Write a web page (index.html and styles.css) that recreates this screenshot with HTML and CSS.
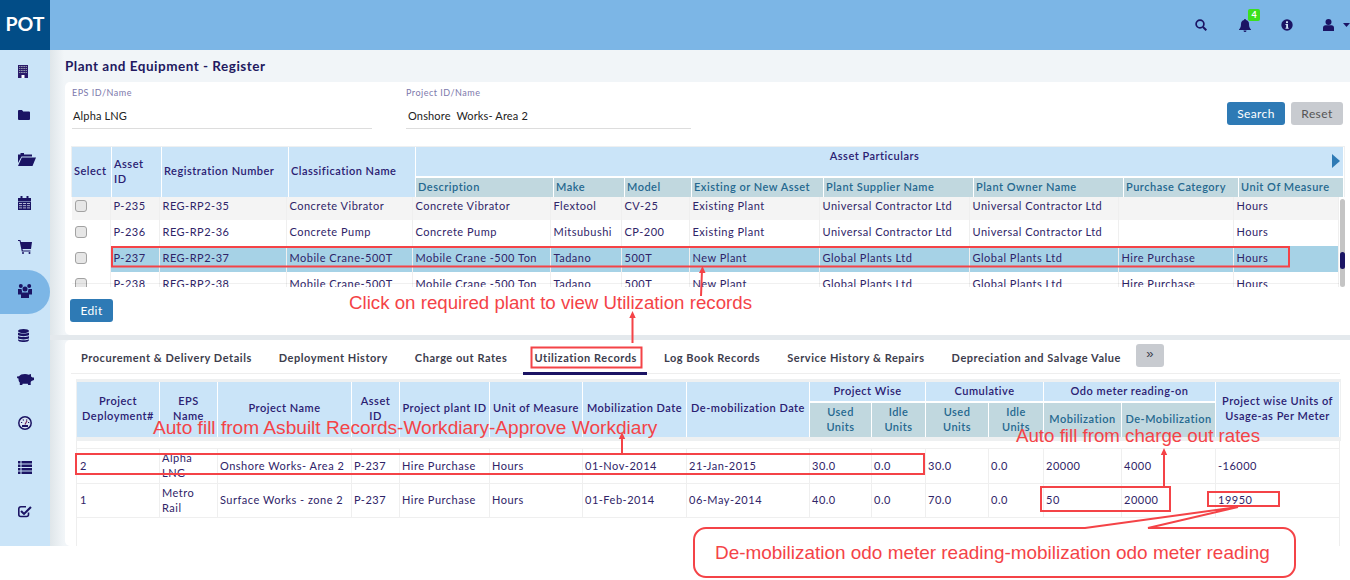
FILE: index.html
```html
<!DOCTYPE html>
<html lang="en">
<head>
<meta charset="utf-8"/>
<meta content="width=device-width, initial-scale=1.0" name="viewport"/>
<title>Plant and Equipment - Register</title>
<link rel="stylesheet" href="styles.css">
</head>
<body>
<div class="app">
<header class="topbar">
  <div class="logo">POT</div>
  <div class="top-icons">
    <svg class="ti-search" viewBox="0 0 12 12"><circle cx="5" cy="5" r="3.9" fill="none" stroke="#1b1464" stroke-width="1.7"/><path d="M8 8l3.3 3.3" stroke="#1b1464" stroke-width="2"/></svg>
    <span class="bell">
      <svg class="ti-bell" viewBox="0 0 12 13"><path d="M6 0a1 1 0 0 1 1 1.1c2 .4 3 2 3 4 0 3 .7 4 2 5.400v.5H0v-.5c1.300-1.400 2-2.400 2-5.400 0-2 1-3.600 3-4A1 1 0 0 1 6 0zM4.500 11.500h3a1.500 1.500 0 0 1-3 0z" fill="#1b1464"/></svg>
      <span class="badge">4</span>
    </span>
    <svg class="ti-info" viewBox="0 0 12 12"><circle cx="6" cy="6" r="5.700" fill="#1b1464"/><rect x="5" y="2.300" width="2" height="1.800" fill="#cfe4f5"/><path d="M4.500 5h2.500v3.700h.7v1H4.500v-1h.7V6h-.7z" fill="#cfe4f5"/></svg>
    <svg class="ti-user" viewBox="0 0 11 12"><circle cx="5.500" cy="3" r="3" fill="#1b1464"/><path d="M0 12V9c0-1.800 1-2.700 2.500-2.700h6C10 6.300 11 7.200 11 9v3z" fill="#1b1464"/></svg>
    <svg class="ti-caret" viewBox="0 0 7 4"><path d="M0 0h7L3.500 4z" fill="#1b1464"/></svg>
  </div>
</header>
<div class="layout">
  <nav class="sidebar">
    <a class="nav-item"><svg width="10" height="13" viewBox="0 0 10 13"><rect width="10" height="13" fill="#2a1a6a"/><path d="M1 1.500h8M1 3.500h8M1 5.500h8M1 7.500h8" stroke="#8d93a8" stroke-width="1"/><path d="M2.500 1v7.500M5 1v7.500M7.500 1v7.500" stroke="#2a1a6a" stroke-width=".6"/><rect x="3.500" y="10" width="3" height="3" fill="#fff"/></svg></a>
    <a class="nav-item"><svg width="12" height="10" viewBox="0 0 12 10"><path d="M0 1a1 1 0 0 1 1-1h3l1.200 1.400H11a1 1 0 0 1 1 1V9a1 1 0 0 1-1 1H1a1 1 0 0 1-1-1z" fill="#1b1464"/></svg></a>
    <a class="nav-item"><svg width="18" height="13" viewBox="0 0 18 13"><path d="M0 1.500h2.500V0H6v1.500h8v2H3.500L0 10z" fill="#1b1464"/><path d="M3.800 4.500H18L14.500 13H0z" fill="#1b1464"/></svg></a>
    <a class="nav-item"><svg width="13" height="14" viewBox="0 0 13 14"><path d="M0 2h2.500V0h2v2h4V0h2v2H13v3H0z" fill="#1b1464"/><rect y="5.500" width="13" height="8.500" fill="#1b1464"/><path d="M1 7.500h11M1 9.700h11M1 11.900h11" stroke="#c5c9e0" stroke-width=".9"/><path d="M4.500 6v8M8.500 6v8" stroke="#1b1464" stroke-width=".9"/></svg></a>
    <a class="nav-item"><svg width="14" height="14" viewBox="0 0 14 14"><path d="M0 0h2.300l.7 2H14l-1 7H4.500l.3 1.500H12.500v1H3.800L1.600 1H0z" fill="#1b1464"/><circle cx="5" cy="13" r="1" fill="#1b1464"/><circle cx="11.500" cy="13" r="1" fill="#1b1464"/></svg></a>
    <a class="nav-item active"><svg width="14" height="14" viewBox="0 0 14 14"><circle cx="2.800" cy="2" r="2" fill="#1b1464"/><circle cx="11.200" cy="2" r="2" fill="#1b1464"/><circle cx="7" cy="5" r="2.500" fill="#1b1464"/><path d="M0 5h3.500l.6 2.700-1 2.800H0zM14 5h-3.500l-.6 2.700 1 2.800H14z" fill="#1b1464"/><path d="M3 8.500h8V14H3z" fill="#1b1464"/></svg></a>
    <a class="nav-item"><svg width="11" height="13" viewBox="0 0 11 13"><ellipse cx="5.500" cy="2" rx="5.500" ry="2" fill="#1b1464"/><path d="M0 3.500c1.500 1.400 9.500 1.400 11 0V6C9.500 7.500 1.500 7.500 0 6zM0 7c1.500 1.400 9.500 1.400 11 0v2.300C9.500 10.800 1.500 10.800 0 9.300zM0 10.200c1.500 1.400 9.500 1.400 11 0V11c0 2.700-11 2.700-11 0z" fill="#1b1464"/></svg></a>
    <a class="nav-item"><svg class="nudge" width="17" height="11" viewBox="0 0 17 11"><path d="M0 3.500c0-1 .8-1.400 1.800-1C3 .8 5 0 8 0c1.500 0 2.700.3 3.500.8L14 0v2.500l1.500 1H17V6l-2.500 1-.8 1V11h-2.500l-.4-1.300H5.700L5.200 11H2.800V8.500C1.800 7.500 1.500 6.500 1.500 4.500 1 4.500 0 4.300 0 3.500z" fill="#1b1464"/></svg></a>
    <a class="nav-item"><svg width="14" height="14" viewBox="0 0 14 14"><circle cx="7" cy="7" r="6.200" fill="#dbe6f3" stroke="#1b1464" stroke-width="1.500"/><path d="M3 6.500h1.200M5 3.500l.6 1M9 3.500l-.6 1M10 6.500h1.200" stroke="#1b1464" stroke-width="1.200"/><path d="M7 8.500L9 4.800" stroke="#7a2a5a" stroke-width="1.200"/><rect x="4" y="9" width="6" height="2" fill="#1b1464"/></svg></a>
    <a class="nav-item"><svg width="14" height="13" viewBox="0 0 14 13"><path d="M0 0h2.500v2.500H0zM3.500 0H14v2.500H3.500zM0 3.500h2.500V6H0zM3.500 3.500H14V6H3.500zM0 7h2.500v2.500H0zM3.500 7H14v2.500H3.500zM0 10.500h2.500V13H0zM3.500 10.500H14V13H3.500z" fill="#1b1464"/></svg></a>
    <a class="nav-item"><svg width="14" height="14" viewBox="0 0 14 14"><path d="M10.500 8.500v2a2 2 0 0 1-2 2H2.800a2 2 0 0 1-2-2V4.800a2 2 0 0 1 2-2H8" fill="none" stroke="#1b1464" stroke-width="1.600"/><path d="M3.800 6.200L6 8.400 12.200 2.300l1.500 1.500L6 11.300 2.300 7.700z" fill="#1b1464"/></svg></a>
  </nav>
  <main class="content">
    <h2 class="page-title">Plant and Equipment - Register</h2>

    <section class="card card-register">
      <div class="filter-row">
        <div class="field field-eps">
          <label>EPS ID/Name</label>
          <div class="field-value">Alpha LNG</div>
        </div>
        <div class="field field-project">
          <label>Project ID/Name</label>
          <div class="field-value">Onshore&nbsp; Works- Area 2</div>
        </div>
        <div class="filter-btns">
          <button class="btn btn-primary">Search</button>
          <button class="btn btn-muted">Reset</button>
        </div>
      </div>

      <div class="grid-head">
        <table class="tbl head-table">
          <colgroup>
            <col style="width:40px"/><col style="width:50px"/><col style="width:127px"/><col style="width:127px"/>
            <col style="width:138px"/><col style="width:71px"/><col style="width:67px"/><col style="width:132px"/>
            <col style="width:150px"/><col style="width:150px"/><col style="width:115px"/><col style="width:105px"/>
          </colgroup>
          <tr>
            <th rowspan="2">Select</th>
            <th rowspan="2">Asset ID</th>
            <th rowspan="2">Registration Number</th>
            <th rowspan="2">Classification Name</th>
            <th colspan="8" class="group-top">Asset Particulars<span class="more-arrow"></span></th>
          </tr>
          <tr class="sub-row">
            <th>Description</th><th>Make</th><th>Model</th><th>Existing or New Asset</th>
            <th>Plant Supplier Name</th><th>Plant Owner Name</th><th>Purchase Category</th><th>Unit Of Measure</th>
          </tr>
        </table>
      </div>
      <div class="grid-body-wrap">
        <div class="grid-body">
          <table class="tbl body-table">
            <colgroup>
              <col style="width:39px"/><col style="width:49px"/><col style="width:127px"/><col style="width:126px"/>
              <col style="width:138px"/><col style="width:71px"/><col style="width:68px"/><col style="width:130px"/>
              <col style="width:150px"/><col style="width:149px"/><col style="width:115px"/><col style="width:105px"/>
            </colgroup>
            <tr class="row-grey">
              <td class="check-cell"><input type="checkbox"/></td><td>P-235</td><td>REG-RP2-35</td><td>Concrete Vibrator</td><td>Concrete Vibrator</td><td>Flextool</td><td>CV-25</td><td>Existing Plant</td><td>Universal Contractor Ltd</td><td>Universal Contractor Ltd</td><td></td><td>Hours</td>
            </tr>
            <tr>
              <td class="check-cell"><input type="checkbox"/></td><td>P-236</td><td>REG-RP2-36</td><td>Concrete Pump</td><td>Concrete Pump</td><td>Mitsubushi</td><td>CP-200</td><td>Existing Plant</td><td>Universal Contractor Ltd</td><td>Universal Contractor Ltd</td><td></td><td>Hours</td>
            </tr>
            <tr class="row-selected">
              <td class="check-cell"><input type="checkbox"/></td><td>P-237</td><td>REG-RP2-37</td><td>Mobile Crane-500T</td><td>Mobile Crane -500 Ton</td><td>Tadano</td><td>500T</td><td>New Plant</td><td>Global Plants Ltd</td><td>Global Plants Ltd</td><td>Hire Purchase</td><td>Hours</td>
            </tr>
            <tr>
              <td class="check-cell"><input type="checkbox"/></td><td>P-238</td><td>REG-RP2-38</td><td>Mobile Crane-500T</td><td>Mobile Crane -500 Ton</td><td>Tadano</td><td>500T</td><td>New Plant</td><td>Global Plants Ltd</td><td>Global Plants Ltd</td><td>Hire Purchase</td><td>Hours</td>
            </tr>
          </table>
        </div>
        <div class="scroll-track"><div class="scroll-thumb"></div></div>
      </div>
      <button class="btn btn-primary btn-edit">Edit</button>
    </section>

    <section class="card card-tabs">
      <div class="tabs">
        <a class="tab">Procurement &amp; Delivery Details</a>
        <a class="tab">Deployment History</a>
        <a class="tab">Charge out Rates</a>
        <a class="tab tab-active">Utilization Records</a>
        <a class="tab">Log Book Records</a>
        <a class="tab">Service History &amp; Repairs</a>
        <a class="tab">Depreciation and Salvage Value</a>
        <button class="tab-more">&raquo;</button>
      </div>
      <div class="util-head">
        <table class="tbl util-table head-util">
          <colgroup>
            <col style="width:83px"/><col style="width:58px"/><col style="width:134px"/><col style="width:48px"/>
            <col style="width:90px"/><col style="width:93px"/><col style="width:104px"/><col style="width:123px"/>
            <col style="width:62px"/><col style="width:54px"/><col style="width:63px"/><col style="width:55px"/>
            <col style="width:78px"/><col style="width:94px"/><col style="width:124px"/>
          </colgroup>
          <tr>
            <th rowspan="2">Project Deployment#</th><th rowspan="2">EPS Name</th><th rowspan="2">Project Name</th><th rowspan="2">Asset ID</th>
            <th rowspan="2">Project plant ID</th><th rowspan="2">Unit of Measure</th><th rowspan="2">Mobilization Date</th><th rowspan="2">De-mobilization Date</th>
            <th colspan="2">Project Wise</th><th colspan="2">Cumulative</th><th colspan="2">Odo meter reading-on</th>
            <th rowspan="2" class="th-wide">Project wise Units of Usage-as Per Meter</th>
          </tr>
          <tr class="sub-row">
            <th>Used Units</th><th>Idle Units</th><th>Used Units</th><th>Idle Units</th><th>Mobilization</th><th>De-Mobilization</th>
          </tr>
        </table>
      </div>
      <div class="util-body">
        <table class="tbl util-table body-util">
          <colgroup>
            <col style="width:83px"/><col style="width:58px"/><col style="width:134px"/><col style="width:48px"/>
            <col style="width:90px"/><col style="width:93px"/><col style="width:104px"/><col style="width:123px"/>
            <col style="width:62px"/><col style="width:54px"/><col style="width:63px"/><col style="width:55px"/>
            <col style="width:78px"/><col style="width:94px"/><col style="width:124px"/>
          </colgroup>
          <tr>
            <td>2</td><td>Alpha LNG</td><td>Onshore Works- Area 2</td><td>P-237</td><td>Hire Purchase</td><td>Hours</td><td>01-Nov-2014</td><td>21-Jan-2015</td><td>30.0</td><td>0.0</td><td>30.0</td><td>0.0</td><td>20000</td><td>4000</td><td>-16000</td>
          </tr>
          <tr>
            <td>1</td><td>Metro Rail</td><td>Surface Works - zone 2</td><td>P-237</td><td>Hire Purchase</td><td>Hours</td><td>01-Feb-2014</td><td>06-May-2014</td><td>40.0</td><td>0.0</td><td>70.0</td><td>0.0</td><td>50</td><td>20000</td><td>19950</td>
          </tr>
        </table>
      </div>
    </section>
  </main>
</div>
</div>

<!-- red notes drawn on top of the screen -->
<svg class="notes" width="1350" height="580" viewBox="0 0 1350 580">
  <g fill="none" stroke="#f44347" stroke-width="2">
    <rect x="112" y="247" width="1177" height="19.500"/>
    <rect x="531.500" y="347.500" width="110" height="20"/>
    <rect x="76" y="454" width="848" height="20"/>
    <rect x="1041" y="487" width="129" height="24"/>
    <rect x="1208" y="492" width="71" height="14"/>
    <path d="M701 296l1-26M632.500 343v-28M622 453v-17M1164 487v-35"/>
    <path d="M1085 528L1238 507 1148 528H1283a12 12 0 0 1 12 12V565a12 12 0 0 1-12 12H706a12 12 0 0 1-12-12V540a12 12 0 0 1 12-12z" fill="#fff"/>
  </g>
  <g fill="#f44347">
    <path d="M702.500 266l3 7h-6.500zM632.500 311l3.200 7h-6.400zM622 432l3.200 7h-6.400zM1164 448l3.200 7h-6.400z"/>
    <text class="note-text" x="349" y="309">Click on required plant to view Utilization records</text>
    <text class="note-text note-wide" x="153" y="434">Auto fill from Asbuilt Records-Workdiary-Approve Workdiary</text>
    <text class="note-text" x="1016" y="442">Auto fill from charge out rates</text>
    <text class="note-text note-mid" x="715" y="559">De-mobilization odo meter reading-mobilization odo meter reading</text>
  </g>
</svg>
</body>
</html>
```

FILE: styles.css
```css
body {
  margin: 0;
  background: #fff;
  font-family: Lato, "Open Sans", sans-serif;
  font-size: 11px;
  letter-spacing: 0.5px;
  color: #2f2468;
}
.app {
  height: 546px;
  overflow: hidden;
}
.topbar {
  display: flex;
  height: 50px;
  background: #7cb6e6;
}
.logo {
  width: 50px;
  background: #024d87;
  color: #fff;
  font-size: 19.500px;
  font-weight: 700;
  line-height: 47px;
  text-align: center;
  letter-spacing: 0;
}
.top-icons {
  margin-left: auto;
  display: flex;
  align-items: center;
}
.top-icons svg { display: block; }
.ti-search { width: 12px; height: 12px; margin-right: 32px; }
.bell { position: relative; margin-right: 30px; }
.ti-bell { width: 12px; height: 13px; }
.badge {
  position: absolute;
  left: 9px;
  top: -10px;
  width: 12px;
  height: 12px;
  border-radius: 2px;
  background: #3ce01c;
  color: #fff;
  font-size: 9px;
  font-weight: 700;
  line-height: 12px;
  text-align: center;
  letter-spacing: 0;
}
.ti-info { width: 12px; height: 12px; margin-right: 30px; }
.ti-user { width: 11px; height: 12px; margin-right: 9px; }
.ti-caret { width: 7px; height: 4px; }

.layout { display: flex; height: 496px; }
.sidebar {
  width: 50px;
  flex-shrink: 0;
  background: #cae4f8;
}
.nav-item {
  display: flex;
  align-items: center;
  height: 44px;
  padding: 0 0 2px 18px;
  box-sizing: border-box;
}
.nav-item.active {
  background: #7cb6e6;
  border-radius: 0 22px 22px 0;
}
.nudge { margin-left: -1px; }

.content {
  flex: 1;
  min-width: 0;
  padding-left: 15px;
  background: linear-gradient(to right, #dfe6ea, #f1f5f8 14px);
}
.page-title {
  margin: 0;
  height: 32px;
  font-size: 13.500px;
  font-weight: 700;
  line-height: 32px;
  color: #22195f;
}
.card {
  background: #fff;
  border-radius: 5px 0 0 5px;
}
.card-register {
  height: 253px;
  padding: 0 6px 0 6px;
  box-sizing: border-box;
}
.card-tabs {
  margin-top: 5px;
  height: 206px;
  box-sizing: border-box;
  padding-top: 1px;
  position: relative;
}
.card-tabs::before {
  content: "";
  position: absolute;
  left: -15px;
  right: 0;
  top: -5px;
  height: 5px;
  background: #e4e9ed;
}

.filter-row {
  display: flex;
  height: 64px;
  box-sizing: border-box;
  padding-top: 5px;
}
.field { margin-left: 1px; }
.field-eps { width: 300px; }
.field-project { width: 285px; margin-left: 34px; }
.field label {
  display: block;
  font-size: 9px;
  line-height: 11px;
  color: #7d79ac;
}
.field-value {
  margin-top: 6px;
  height: 25px;
  padding-left: 1px;
  box-sizing: border-box;
  border-bottom: 1px solid #ddd;
  line-height: 24px;
  color: #222;
  letter-spacing: 0.15px;
}
.field-project .field-value { padding-left: 2px; }
.filter-btns {
  margin-left: auto;
  display: flex;
  gap: 6px;
  margin-right: 1px;
  padding-top: 15px;
}
.btn {
  height: 23px;
  padding: 0;
  border: 0;
  border-radius: 3px;
  font-family: inherit;
  font-size: 12px;
  letter-spacing: 0.4px;
}
.btn-primary { background: #2e7ab5; color: #fff; width: 58px; }
.btn-muted { background: #c8cbd0; color: #555; width: 52px; }
.btn-edit { width: 43px; margin: 12px 0 0 -1px; display: block; }

.tbl {
  table-layout: fixed;
  border-collapse: separate;
  border-spacing: 0;
}
.grid-head {
  background: #eef0f1;
  padding: 1px 0 0 1px;
  width: 1273px;
}
.head-table { width: 1272px; }
.tbl th {
  background: #cae4f8;
  border-right: 1px solid #fff;
  color: #2a2072;
  font-weight: 600;
  line-height: 15px;
  text-align: left;
  padding: 0 2px;
}
.head-table th[rowspan] { padding-bottom: 3px; }
.group-top {
  position: relative;
  text-align: center !important;
  vertical-align: top;
  height: 28px;
  padding: 1px 10px 0 0 !important;
}
.more-arrow {
  position: absolute;
  right: 3px;
  top: 7px;
  border-left: 8px solid #2e7ab5;
  border-top: 7px solid transparent;
  border-bottom: 7px solid transparent;
}
.tbl .sub-row th {
  background: #c1d8df;
  border-top: 2px solid #fff;
  color: #25688f;
  height: 16px;
  padding-bottom: 3px;
}
.grid-body-wrap {
  display: flex;
  height: 90px;
  width: 1274px;
}
.grid-body {
  width: 1267px;
  overflow: hidden;
  margin-left: 1px;
  position: relative;
}
.grid-body::after {
  content: "";
  position: absolute;
  left: 0;
  right: 0;
  top: 86px;
  height: 1px;
  background: rgba(0, 0, 0, 0.06);
}
.body-table { width: 1267px; margin-top: -3px; }
.tbl td {
  padding: 0 2px 4px 2.500px;
  height: 26px;
  box-sizing: border-box;
  border-right: 1px solid #efefef;
  white-space: nowrap;
  overflow: hidden;
  line-height: 15px;
}
.tbl td.check-cell { padding-bottom: 2px; }
.row-grey td { background: #f4f4f4; }
.row-selected td { background: #a6d2e6; }
.row-selected td.check-cell { background: #fff; }
.check-cell input {
  appearance: none;
  display: block;
  width: 12px;
  height: 12px;
  margin: 0;
  background: #e6e6e6;
  border: 1px solid #a2a2a2;
  border-radius: 3px;
  box-sizing: border-box;
}
.scroll-track {
  width: 5px;
  margin: 2px 0 0 1px;
  height: 88px;
  background: #c4c4c4;
  border-radius: 3px;
  position: relative;
}
.scroll-thumb {
  position: absolute;
  left: 0;
  right: 0;
  top: 53px;
  height: 17px;
  border-radius: 3px;
  background: #1b1464;
}

.tabs {
  display: flex;
  align-items: center;
  height: 32px;
  margin: 0 10px 0 6px;
  padding-left: 10px;
  border-bottom: 1px solid #eee;
}
.tab {
  position: relative;
  font-weight: 700;
  color: #3d3d4d;
  margin-right: 27px;
  letter-spacing: 0.54px;
}
.tab-active::after {
  content: "";
  position: absolute;
  left: -11px;
  right: -10px;
  bottom: -11px;
  height: 3px;
  background: #1b1464;
}
.tab-more {
  width: 28px;
  height: 23px;
  margin: -3px 0 0 -12px;
  border: 0;
  border-radius: 3px;
  background: #c8cbd0;
  color: #3d3d4d;
  font-size: 13px;
  line-height: 18px;
  padding: 0 0 3px 0;
}
.util-head {
  margin: 5px 0 0 11px;
  width: 1264px;
  padding: 3px 0 4px 1px;
  background: #eef0f1;
}
.util-table { width: 1263px; }
.head-util th {
  text-align: center;
  height: 16px;
  padding-bottom: 3px;
}
.head-util th[rowspan] {
  height: auto;
  padding-bottom: 4px;
}
.tbl.head-util .sub-row th {
  height: 31px;
  padding-bottom: 3px;
}
.head-util th.th-wide { padding: 0 3px 4px; }
.util-body {
  margin-left: 11px;
  width: 1264px;
  height: 106px;
  padding-top: 7px;
  box-sizing: border-box;
  border-left: 1px solid #eee;
  border-right: 1px solid #eee;
}
.body-util { width: 1263px; }
.body-util td {
  height: 35px;
  padding: 0 2px 2px;
  white-space: normal;
  border-top: 1px solid #efefef;
  border-right: 1px solid #efefef;
}
.body-util td:first-child { padding-left: 3px; }
.body-util tr:last-child td { border-bottom: 1px solid #efefef; }

.notes {
  position: absolute;
  left: 0;
  top: 0;
  pointer-events: none;
}
.note-text {
  font-family: "Liberation Sans", Arial, sans-serif;
  font-size: 18.700px;
  letter-spacing: 0;
}
.note-wide { font-size: 19.100px; }
.note-mid { font-size: 18.950px; }
```
